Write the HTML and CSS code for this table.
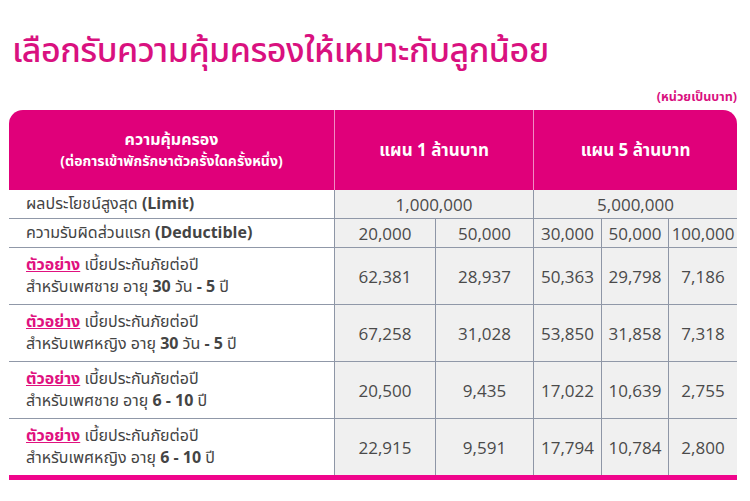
FILE: index.html
```html
<!DOCTYPE html>
<html lang="th">
<head>
<meta charset="utf-8">
<link rel="stylesheet" href="styles.css">
</head>
<body>
<div class="page">
  <h1 class="title">เลือกรับความคุ้มครองให้เหมาะกับลูกน้อย</h1>
  <div class="unit">(หน่วยเป็นบาท)</div>
  <table class="plan">
    <colgroup>
      <col class="c-label"><col class="c-a"><col class="c-b"><col class="c-c"><col class="c-d"><col class="c-e">
    </colgroup>
    <thead>
      <tr>
        <th class="h-first"><div class="h-main">ความคุ้มครอง</div><div class="h-sub">(ต่อการเข้าพักรักษาตัวครั้งใดครั้งหนึ่ง)</div></th>
        <th colspan="2" class="h-mid">แผน 1 ล้านบาท</th>
        <th colspan="3" class="h-last">แผน 5 ล้านบาท</th>
      </tr>
    </thead>
    <tbody>
      <tr class="r-short">
        <td class="lbl">ผลประโยชน์สูงสุด <b>(Limit)</b></td>
        <td colspan="2" class="num">1,000,000</td>
        <td colspan="3" class="num">5,000,000</td>
      </tr>
      <tr class="r-short">
        <td class="lbl">ความรับผิดส่วนแรก <b>(Deductible)</b></td>
        <td class="num">20,000</td>
        <td class="num">50,000</td>
        <td class="num">30,000</td>
        <td class="num">50,000</td>
        <td class="num">100,000</td>
      </tr>
      <tr class="r-tall">
        <td class="lbl"><span class="ex">ตัวอย่าง</span> เบี้ยประกันภัยต่อปี<br>สำหรับเพศชาย อายุ <b>30</b> วัน <b>- 5</b> ปี</td>
        <td class="num">62,381</td>
        <td class="num">28,937</td>
        <td class="num">50,363</td>
        <td class="num">29,798</td>
        <td class="num">7,186</td>
      </tr>
      <tr class="r-tall">
        <td class="lbl"><span class="ex">ตัวอย่าง</span> เบี้ยประกันภัยต่อปี<br>สำหรับเพศหญิง อายุ <b>30</b> วัน <b>- 5</b> ปี</td>
        <td class="num">67,258</td>
        <td class="num">31,028</td>
        <td class="num">53,850</td>
        <td class="num">31,858</td>
        <td class="num">7,318</td>
      </tr>
      <tr class="r-tall">
        <td class="lbl"><span class="ex">ตัวอย่าง</span> เบี้ยประกันภัยต่อปี<br>สำหรับเพศชาย อายุ <b>6 - 10</b> ปี</td>
        <td class="num">20,500</td>
        <td class="num">9,435</td>
        <td class="num">17,022</td>
        <td class="num">10,639</td>
        <td class="num">2,755</td>
      </tr>
      <tr class="r-tall r-last">
        <td class="lbl"><span class="ex">ตัวอย่าง</span> เบี้ยประกันภัยต่อปี<br>สำหรับเพศหญิง อายุ <b>6 - 10</b> ปี</td>
        <td class="num">22,915</td>
        <td class="num">9,591</td>
        <td class="num">17,794</td>
        <td class="num">10,784</td>
        <td class="num">2,800</td>
      </tr>
    </tbody>
  </table>
</div>
</body>
</html>
```
FILE: styles.css
```css
html, body {
  margin: 0;
  padding: 0;
  background: #ffffff;
}
body {
  font-family: "Noto Sans Thai", "Noto Sans", "Open Sans", sans-serif;
  color: #444;
}
.page {
  width: 750px;
  height: 501px;
  padding: 26px 13px 0 9px;
  box-sizing: border-box;
}
.title {
  margin: 0 0 0 3px;
  font-size: 34px;
  line-height: 52px;
  font-weight: 500;
  color: #d9117f;
  letter-spacing: -0.5px;
}
.unit {
  text-align: right;
  font-size: 12.5px;
  font-weight: 700;
  line-height: 16px;
  color: #d9117f;
  margin-top: 12px;
  height: 20px;
}
.plan {
  width: 728px;
  table-layout: fixed;
  border-collapse: separate;
  border-spacing: 0;
  border-bottom: 5px solid #f0058c;
}
.c-label { width: 326px; }
.c-a { width: 101px; }
.c-b { width: 98px; }
.c-c { width: 68px; }
.c-d { width: 67px; }
.c-e { width: 68px; }

.plan th {
  background: #e0007a;
  color: #ffffff;
  height: 78px;
  padding: 2px 0 0 0;
  font-weight: 700;
  font-size: 17px;
  text-align: center;
  vertical-align: middle;
  border-right: 1px solid rgba(255, 255, 255, 0.55);
}
.plan th.h-first { border-top-left-radius: 14px; }
.plan th.h-last { border-top-right-radius: 14px; border-right: none; }
.h-main { font-size: 16px; line-height: 21px; }
.h-sub { font-size: 14px; line-height: 21px; }

.plan td {
  padding: 0;
  border-bottom: 1px solid #9098a8;
  border-right: 1px solid #8e96a6;
  background: #f0f0f0;
}
.plan td:last-child { border-right: none; }
.plan tr.r-last td { border-bottom: none; }
.plan td.lbl {
  background: #ffffff;
  padding-left: 17px;
  font-size: 16px;
  line-height: 22px;
  color: #444;
  text-align: left;
}
.plan td.lbl b { font-weight: 700; }
.r-short td { height: 28px; }
.r-tall td { height: 56px; }
.r-last td { height: 56px; }
.num {
  text-align: center;
  font-family: "Open Sans", "Noto Sans", sans-serif;
  font-size: 17px;
  color: #4a4a4a;
}
.ex {
  color: #e0117f;
  font-weight: 700;
  text-decoration: underline;
}
```
